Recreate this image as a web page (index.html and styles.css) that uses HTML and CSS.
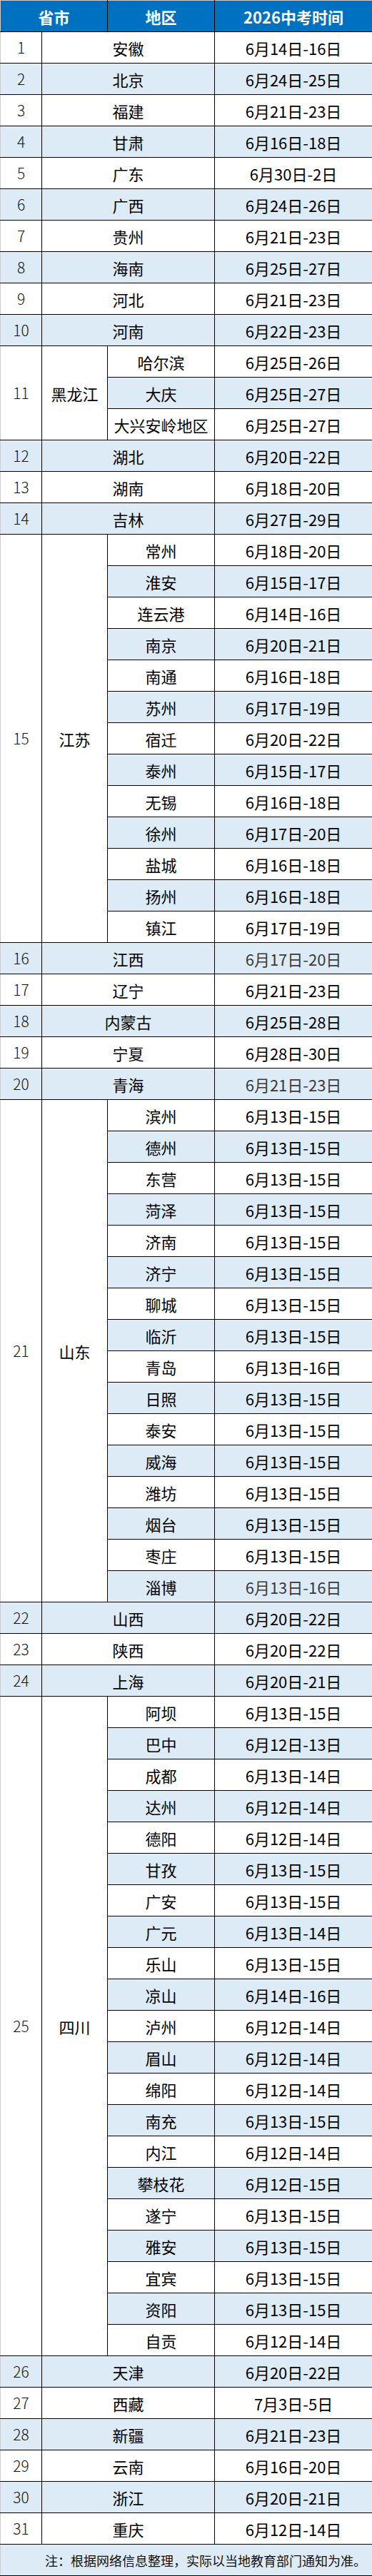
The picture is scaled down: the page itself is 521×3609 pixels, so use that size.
FILE: index.html
```html
<!DOCTYPE html>
<html lang="zh-CN">
<head>
<meta charset="utf-8">
<title>2026中考时间</title>
<link rel="stylesheet" href="styles.css">
</head>
<body>
<table class="schedule">
  <colgroup>
    <col class="c-no">
    <col class="c-prov">
    <col class="c-city">
    <col class="c-date">
  </colgroup>
  <thead>
    <tr><th colspan="2">省市</th><th>地区</th><th>2026中考时间</th></tr>
  </thead>
  <tbody>
    <tr><td class="no">1</td><td colspan="2">安徽</td><td>6月14日-16日</td></tr>
    <tr class="b"><td class="no">2</td><td colspan="2">北京</td><td>6月24日-25日</td></tr>
    <tr><td class="no">3</td><td colspan="2">福建</td><td>6月21日-23日</td></tr>
    <tr class="b"><td class="no">4</td><td colspan="2">甘肃</td><td>6月16日-18日</td></tr>
    <tr><td class="no">5</td><td colspan="2">广东</td><td>6月30日-2日</td></tr>
    <tr class="b"><td class="no">6</td><td colspan="2">广西</td><td>6月24日-26日</td></tr>
    <tr><td class="no">7</td><td colspan="2">贵州</td><td>6月21日-23日</td></tr>
    <tr class="b"><td class="no">8</td><td colspan="2">海南</td><td>6月25日-27日</td></tr>
    <tr><td class="no">9</td><td colspan="2">河北</td><td>6月21日-23日</td></tr>
    <tr class="b"><td class="no">10</td><td colspan="2">河南</td><td>6月22日-23日</td></tr>

    <tr><td class="no span" rowspan="3">11</td><td class="span" rowspan="3">黑龙江</td><td>哈尔滨</td><td>6月25日-26日</td></tr>
    <tr class="b"><td>大庆</td><td>6月25日-27日</td></tr>
    <tr><td>大兴安岭地区</td><td>6月25日-27日</td></tr>

    <tr class="b"><td class="no">12</td><td colspan="2">湖北</td><td>6月20日-22日</td></tr>
    <tr><td class="no">13</td><td colspan="2">湖南</td><td>6月18日-20日</td></tr>
    <tr class="b"><td class="no">14</td><td colspan="2">吉林</td><td>6月27日-29日</td></tr>

    <tr><td class="no span" rowspan="13">15</td><td class="span" rowspan="13">江苏</td><td>常州</td><td>6月18日-20日</td></tr>
    <tr class="b"><td>淮安</td><td>6月15日-17日</td></tr>
    <tr><td>连云港</td><td>6月14日-16日</td></tr>
    <tr class="b"><td>南京</td><td>6月20日-21日</td></tr>
    <tr><td>南通</td><td>6月16日-18日</td></tr>
    <tr class="b"><td>苏州</td><td>6月17日-19日</td></tr>
    <tr><td>宿迁</td><td>6月20日-22日</td></tr>
    <tr class="b"><td>泰州</td><td>6月15日-17日</td></tr>
    <tr><td>无锡</td><td>6月16日-18日</td></tr>
    <tr class="b"><td>徐州</td><td>6月17日-20日</td></tr>
    <tr><td>盐城</td><td>6月16日-18日</td></tr>
    <tr class="b"><td>扬州</td><td>6月16日-18日</td></tr>
    <tr><td>镇江</td><td>6月17日-19日</td></tr>

    <tr class="b"><td class="no">16</td><td colspan="2">江西</td><td class="dim">6月17日-20日</td></tr>
    <tr><td class="no">17</td><td colspan="2">辽宁</td><td>6月21日-23日</td></tr>
    <tr class="b"><td class="no">18</td><td colspan="2">内蒙古</td><td>6月25日-28日</td></tr>
    <tr><td class="no">19</td><td colspan="2">宁夏</td><td>6月28日-30日</td></tr>
    <tr class="b"><td class="no">20</td><td colspan="2">青海</td><td class="dim">6月21日-23日</td></tr>

    <tr><td class="no span" rowspan="16">21</td><td class="span" rowspan="16">山东</td><td>滨州</td><td>6月13日-15日</td></tr>
    <tr class="b"><td>德州</td><td>6月13日-15日</td></tr>
    <tr><td>东营</td><td>6月13日-15日</td></tr>
    <tr class="b"><td>菏泽</td><td>6月13日-15日</td></tr>
    <tr><td>济南</td><td>6月13日-15日</td></tr>
    <tr class="b"><td>济宁</td><td>6月13日-15日</td></tr>
    <tr><td>聊城</td><td>6月13日-15日</td></tr>
    <tr class="b"><td>临沂</td><td>6月13日-15日</td></tr>
    <tr><td>青岛</td><td>6月13日-16日</td></tr>
    <tr class="b"><td>日照</td><td>6月13日-15日</td></tr>
    <tr><td>泰安</td><td>6月13日-15日</td></tr>
    <tr class="b"><td>威海</td><td>6月13日-15日</td></tr>
    <tr><td>潍坊</td><td>6月13日-15日</td></tr>
    <tr class="b"><td>烟台</td><td>6月13日-15日</td></tr>
    <tr><td>枣庄</td><td>6月13日-15日</td></tr>
    <tr class="b"><td>淄博</td><td class="dim">6月13日-16日</td></tr>

    <tr class="b"><td class="no">22</td><td colspan="2">山西</td><td>6月20日-22日</td></tr>
    <tr><td class="no">23</td><td colspan="2">陕西</td><td>6月20日-22日</td></tr>
    <tr class="b"><td class="no">24</td><td colspan="2">上海</td><td>6月20日-21日</td></tr>

    <tr><td class="no span" rowspan="21">25</td><td class="span" rowspan="21">四川</td><td>阿坝</td><td>6月13日-15日</td></tr>
    <tr class="b"><td>巴中</td><td>6月12日-13日</td></tr>
    <tr><td>成都</td><td>6月13日-14日</td></tr>
    <tr class="b"><td>达州</td><td>6月12日-14日</td></tr>
    <tr><td>德阳</td><td>6月12日-14日</td></tr>
    <tr class="b"><td>甘孜</td><td>6月13日-15日</td></tr>
    <tr><td>广安</td><td>6月13日-15日</td></tr>
    <tr class="b"><td>广元</td><td>6月13日-14日</td></tr>
    <tr><td>乐山</td><td>6月13日-15日</td></tr>
    <tr class="b"><td>凉山</td><td>6月14日-16日</td></tr>
    <tr><td>泸州</td><td>6月12日-14日</td></tr>
    <tr class="b"><td>眉山</td><td>6月12日-14日</td></tr>
    <tr><td>绵阳</td><td>6月12日-14日</td></tr>
    <tr class="b"><td>南充</td><td>6月13日-15日</td></tr>
    <tr><td>内江</td><td>6月12日-14日</td></tr>
    <tr class="b"><td>攀枝花</td><td>6月12日-15日</td></tr>
    <tr><td>遂宁</td><td>6月13日-15日</td></tr>
    <tr class="b"><td>雅安</td><td>6月13日-15日</td></tr>
    <tr><td>宜宾</td><td>6月13日-15日</td></tr>
    <tr class="b"><td>资阳</td><td>6月13日-15日</td></tr>
    <tr><td>自贡</td><td>6月12日-14日</td></tr>

    <tr class="b"><td class="no">26</td><td colspan="2">天津</td><td>6月20日-22日</td></tr>
    <tr><td class="no">27</td><td colspan="2">西藏</td><td>7月3日-5日</td></tr>
    <tr class="b"><td class="no">28</td><td colspan="2">新疆</td><td>6月21日-23日</td></tr>
    <tr><td class="no">29</td><td colspan="2">云南</td><td>6月16日-20日</td></tr>
    <tr class="b"><td class="no">30</td><td colspan="2">浙江</td><td>6月20日-21日</td></tr>
    <tr><td class="no">31</td><td colspan="2">重庆</td><td>6月12日-14日</td></tr>

    <tr class="b"><td class="note" colspan="4">注：根据网络信息整理，实际以当地教育部门通知为准。</td></tr>
  </tbody>
</table>
</body>
</html>
```

FILE: styles.css
```css
html, body {
  margin: 0;
  padding: 0;
  background: #ffffff;
}

.schedule {
  border-collapse: collapse;
  table-layout: fixed;
  width: 521px;
  font-family: "Microsoft YaHei", "Noto Sans CJK SC", "Noto Sans", sans-serif;
  font-size: 22px;
  color: #000000;
  border-left: 1px solid #c9cdd2;
  border-top: 1px solid #c9cdd2;
}

.c-no { width: 58px; }
.c-prov { width: 92px; }
.c-city { width: 150px; }
.c-date { width: 221px; }

.schedule tr {
  height: 44px;
}

.schedule th,
.schedule td {
  border: 1px solid #000000;
  padding: 0;
  text-align: center;
  vertical-align: middle;
  line-height: 1;
  white-space: nowrap;
  background: #ffffff;
}

.schedule th {
  background: #0070c0;
  color: #ffffff;
  font-weight: 700;
  font-size: 22px;
}

.schedule thead tr th {
  border-top: 1px solid #c9cdd2;
}

.schedule th:first-child,
.schedule td:first-child {
  border-left: 1px solid #c9cdd2;
}

.schedule tr.b td {
  background: #ddebf7;
}

.schedule tr td.span {
  background: #ffffff;
}

.schedule td.no {
  font-weight: 300;
  font-size: 21px;
  color: #111111;
}

.schedule td.dim {
  color: #3a3a3a;
}

.schedule td.note {
  text-align: right;
  padding-right: 8px;
  font-size: 18px;
  color: #111111;
}
```
